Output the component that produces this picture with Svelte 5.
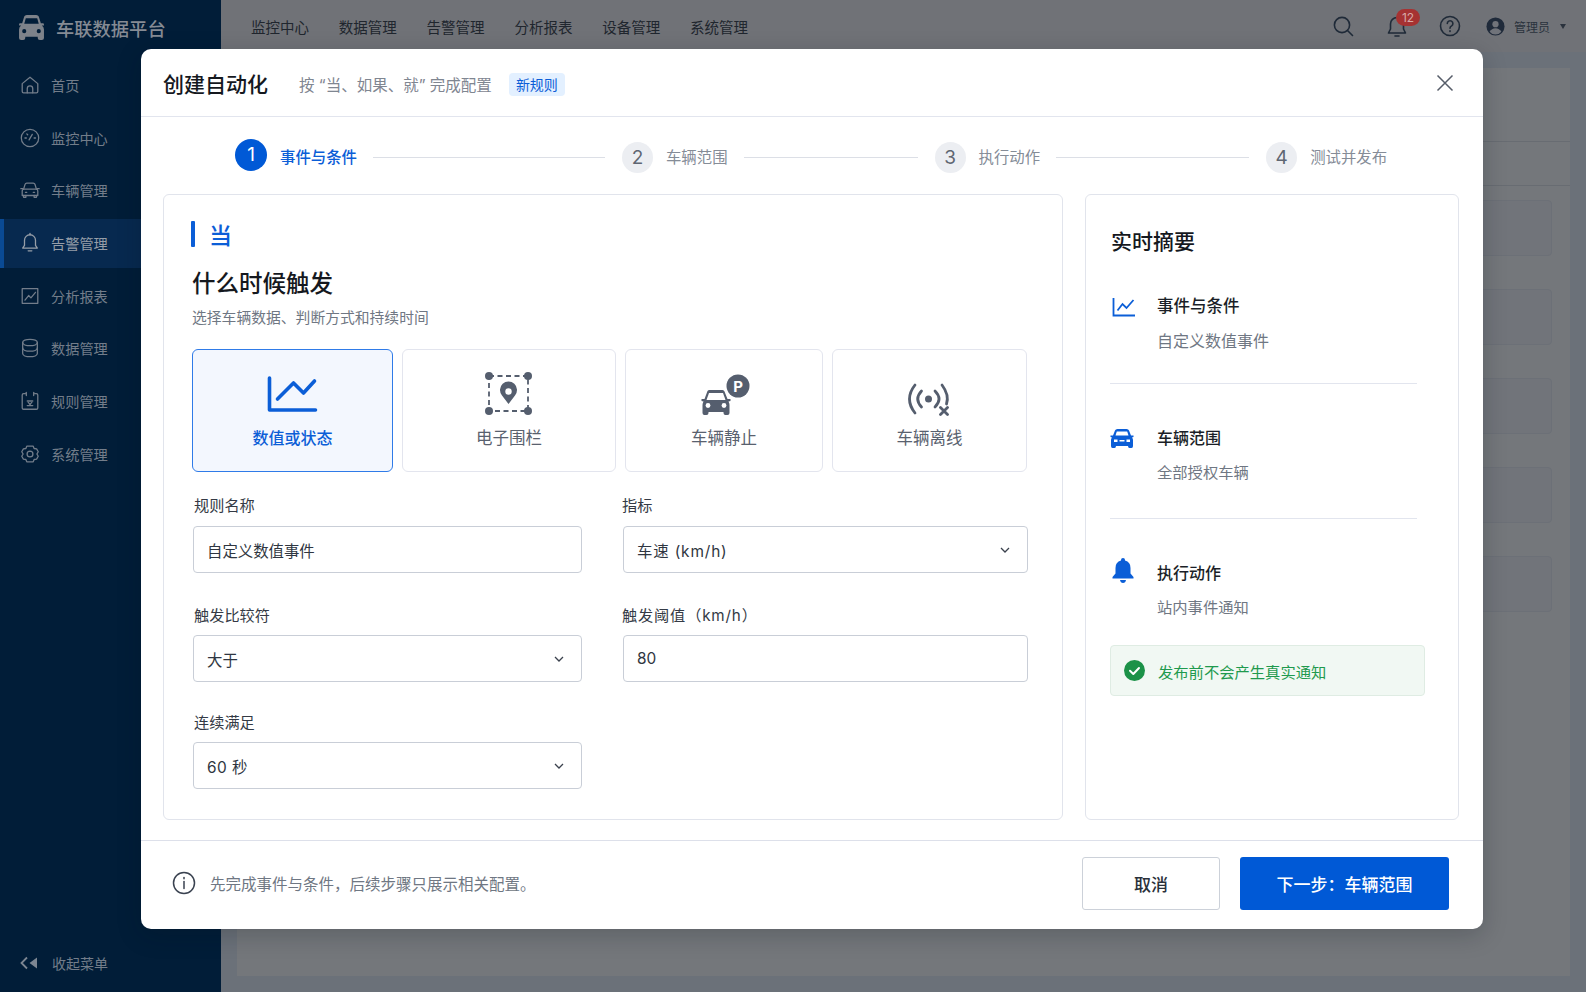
<script>
  const icons = {
    home: ['M3.5 10.5 12 3.5l8.5 7V19a1.5 1.5 0 0 1-1.5 1.5H5A1.5 1.5 0 0 1 3.5 19z', 'M9 20.5V16a3 3 0 0 1 6 0v4.5'],
    gauge: ['M12 2.5a9.5 9.5 0 1 0 0 19 9.5 9.5 0 0 0 0-19z', 'M11 14l3.5-6', 'M6.5 12H8', 'M8.5 7.5l1 1', 'M16.5 12H18'],
    car: ['M5 11l1.6-5.2A2 2 0 0 1 8.5 4.4h7a2 2 0 0 1 1.9 1.4L19 11', 'M3.5 13a2 2 0 0 1 2-2h13a2 2 0 0 1 2 2v5h-17z', 'M5 18v2h2.5v-2', 'M16.5 18v2H19v-2', 'M7 14.5h1.5', 'M15.5 14.5H17', 'M2 10.5h2', 'M20 10.5h2'],
    bell: ['M12 3a6 6 0 0 0-6 6v5.5L4 17.5h16l-2-3V9a6 6 0 0 0-6-6z', 'M12 1.5V3', 'M10 20.5h4'],
    chart: ['M3.5 4h17v16h-17z', 'M6.5 16.5l4-5 2.5 2.5 5-6'],
    db: ['M4 6c0-2 3.6-3.5 8-3.5S20 4 20 6s-3.6 3.5-8 3.5S4 8 4 6z', 'M4 6v12c0 2 3.6 3.5 8 3.5s8-1.500 8-3.500V6', 'M4 12c0 2 3.600 3.500 8 3.500s8-1.500 8-3.500'],
    rule: ['M7 4H5a1.500 1.500 0 0 0-1.500 1.500v14A1.500 1.500 0 0 0 5 21h14a1.500 1.500 0 0 0 1.500-1.500v-14A1.500 1.500 0 0 0 19 4h-2', 'M8 2.500V6', 'M16 2.500V6', 'M9 12h6', 'M12 15.500 10 13.500', 'M12 15.500 14 13.500', 'M9 17h6'],
    gear: ['M8.500 3.500h7l1 2.500 2.700.400 1.800 3.100-1.500 2.500 1.500 2.500-1.800 3.100-2.700.400-1 2.500h-7l-1-2.500-2.700-.400L3 14.500 4.500 12 3 9.500l1.800-3.100 2.700-.400z', 'M12 8.800a3.200 3.200 0 1 0 0 6.400 3.200 3.200 0 0 0 0-6.400z']
  };
  const nav = [
    ['首页', 'home'], ['监控中心', 'gauge'], ['车辆管理', 'car'], ['告警管理', 'bell', true],
    ['分析报表', 'chart'], ['数据管理', 'db'], ['规则管理', 'rule'], ['系统管理', 'gear']
  ];
  const top = ['监控中心', '数据管理', '告警管理', '分析报表', '设备管理', '系统管理'];
  const cards = [1, 2, 3, 4, 5];
  const steps = [
    { n: 1, label: '事件与条件', line: 232, on: true },
    { n: 2, label: '车辆范围', line: 174 },
    { n: 3, label: '执行动作', line: 193 },
    { n: 4, label: '测试并发布' }
  ];
  const carFill = 'M15 19Q15.500 18 17 18H30Q31.500 18 32 19.500L35 27H38V29L36 29.500Q37 31 37 33V41Q37 43 35 43H33Q31 43 31 41V40H16V41Q16 43 14 43H12Q10 43 10 41V33Q10 31 11 29.500L9 29V27H12Z';
</script>

<div class="page">
  <aside class="side">
    <div class="brand">
      <svg class="brand-car" viewBox="0 0 26 24"><path d="M6 1.500Q6.500 0 8.500 0h9q2 0 2.500 1.500L22 8h2a1 1 0 0 1 1 1v1h-2q2 1.500 2 4v8q0 2-2 2h-2q-2 0-2-2v-1H7v1q0 2-2 2H3q-2 0-2-2v-8q0-2.500 2-4H1V9a1 1 0 0 1 1-1h2z"/><path class="cut" d="M7.500 3h11l1.500 5.500H6zM6 13.500a2 2 0 1 0 0 4 2 2 0 0 0 0-4zM20 13.500a2 2 0 1 0 0 4 2 2 0 0 0 0-4z"/></svg>
      <span>车联数据平台</span>
    </div>
    <nav class="menu">
      {#each nav as [label, icon, active]}
        <div class="menu-item" class:active>
          <svg class="menu-icon" viewBox="0 0 24 24">{#each icons[icon] as d}<path {d}/>{/each}</svg>
          <span>{label}</span>
        </div>
      {/each}
    </nav>
    <div class="collapse">
      <svg viewBox="0 0 18 14"><path class="chev" d="M7 1.500 1.500 7 7 12.500"/><path class="tri" d="M17 1.500v11L9.500 7z"/></svg>
      <span>收起菜单</span>
    </div>
  </aside>

  <div class="main">
    <header class="topbar">
      <div class="top-nav">
        {#each top as t}<span>{t}</span>{/each}
      </div>
      <div class="top-tools">
        <svg class="tool" viewBox="0 0 24 24"><circle cx="11" cy="11" r="7.600"/><path d="M16.500 16.500 21.500 21.500"/></svg>
        <div class="bell-wrap">
          <svg class="tool" viewBox="0 0 24 24"><path d="M12 3.500a6.500 6.500 0 0 0-6.500 6.500v5L3.500 19h17l-2-4v-5A6.500 6.500 0 0 0 12 3.500z"/><path d="M10 22h4"/></svg>
          <span class="badge">12</span>
        </div>
        <svg class="tool" viewBox="0 0 24 24"><circle cx="12" cy="12" r="9.500"/><path d="M9.300 9.500a2.800 2.800 0 1 1 4.300 2.400c-1 .600-1.600 1.200-1.600 2.400"/><path d="M12 16.800v.6"/></svg>
        <div class="user">
          <svg viewBox="0 0 20 20"><circle cx="10" cy="10" r="9.500" class="u-bg"/><circle cx="10" cy="7.500" r="3.300" class="u-fg"/><path d="M3.800 15.500Q6 11.800 10 11.800t6.200 3.700Q13.800 18.500 10 18.500T3.800 15.500z" class="u-fg"/></svg>
          <span>管理员</span>
          <i class="caret"></i>
        </div>
      </div>
    </header>
    <section class="panel">
      <div class="panel-row first"></div>
      <div class="panel-row second"></div>
      <div class="panel-cards">
        {#each cards as c}<div class="panel-card"></div>{/each}
      </div>
    </section>
  </div>

  <div class="modal">
    <header class="m-head">
      <h1>创建自动化</h1>
      <span class="m-sub">按 “当、如果、就” 完成配置</span>
      <span class="tag">新规则</span>
      <svg class="close" viewBox="0 0 18 18"><path d="M1.500 1.500 16.500 16.500M16.500 1.500 1.500 16.500"/></svg>
    </header>

    <div class="steps">
      {#each steps as s}
        <span class="num" class:on={s.on}>{s.n}</span>
        <span class="step-label" class:on={s.on}>{s.label}</span>
        {#if s.line}<i class="step-line" style="width:{s.line}px"></i>{/if}
      {/each}
    </div>

    <div class="body">
      <section class="form-card">
        <div class="when"><i></i><span>当</span></div>
        <h2>什么时候触发</h2>
        <p class="desc">选择车辆数据、判断方式和持续时间</p>

        <div class="tiles">
          <div class="tile sel">
            <svg viewBox="0 0 60 44"><path class="line-blue" d="M6.500 6V38H52.500"/><path class="line-blue" d="M14.500 27 30.500 11 40.500 21 51.500 9"/></svg>
            <span>数值或状态</span>
          </div>
          <div class="tile">
            <svg viewBox="0 0 60 44">
              <path class="dash" d="M10 4H49V39H10z"/>
              <circle cx="10" cy="4" r="4" class="fillg"/><circle cx="49" cy="4" r="4" class="fillg"/><circle cx="10" cy="39" r="4" class="fillg"/><circle cx="49" cy="39" r="4" class="fillg"/>
              <path class="fillg" d="M29.500 32 23 23.500A8.500 8.500 0 1 1 36 23.500z"/>
              <circle cx="29.500" cy="19.500" r="3.200" class="fillw"/>
            </svg>
            <span>电子围栏</span>
          </div>
          <div class="tile">
            <svg class="park" viewBox="0 0 60 44">
              <path class="fillg" d={carFill}/>
              <path class="fillw" d="M16.500 21H30.500L33 28H14Z"/>
              <circle cx="15.500" cy="33.500" r="2.400" class="fillw"/><circle cx="31.500" cy="33.500" r="2.400" class="fillw"/>
              <circle cx="45.500" cy="14" r="11.500" class="fillg"/>
              <text x="45.500" y="19.500" class="p">P</text>
            </svg>
            <span>车辆静止</span>
          </div>
          <div class="tile">
            <svg viewBox="0 0 60 44">
              <g class="arcs"><path d="M15 13Q4 27 15 41"/><path d="M21.500 19Q14 27 21.500 35"/><path d="M35 19Q43 27 35 35"/><path d="M42 13Q49.500 23 46.500 32"/><path d="M40.500 35.500 47.500 42.500M47.500 35.500 40.500 42.500"/></g>
              <circle cx="28.500" cy="27" r="3.500" class="fillg"/>
            </svg>
            <span>车辆离线</span>
          </div>
        </div>

        <div class="fields">
          <div class="field r1"><span class="f-label">规则名称</span><div class="box">自定义数值事件</div></div>
          <div class="field r1 right"><span class="f-label">指标</span><div class="box"><span class="wider">车速 (km/h)</span><svg class="chevron" viewBox="0 0 10 6"><path d="M1 1l4 4 4-4"/></svg></div></div>
          <div class="field r2"><span class="f-label">触发比较符</span><div class="box">大于<svg class="chevron" viewBox="0 0 10 6"><path d="M1 1l4 4 4-4"/></svg></div></div>
          <div class="field r2 right"><span class="f-label wider">触发阈值（km/h）</span><div class="box">80</div></div>
          <div class="field r3"><span class="f-label">连续满足</span><div class="box"><span class="wide">60 秒</span><svg class="chevron" viewBox="0 0 10 6"><path d="M1 1l4 4 4-4"/></svg></div></div>
        </div>
      </section>

      <aside class="summary">
        <h3>实时摘要</h3>
        <div class="s-item s1">
          <svg class="s-icon" viewBox="0 0 24 20"><path class="line-s" d="M1.500 1V18.500H23"/><path class="line-s" d="M5.500 13.500 10.500 7l4 4 7-8"/></svg>
          <div><b>事件与条件</b><p>自定义数值事件</p></div>
        </div>
        <div class="s-item s2">
          <svg class="s-icon" viewBox="0 0 24 19"><path class="fillb" d="M5 1.500Q5.500 0 7.500 0h9q2 0 2.500 1.500L21 6.500h2.500v1.500l-1.500.500q1 1 1 2.500v6q0 2-1.500 2h-2q-1.500 0-1.500-2H6q0 2-1.500 2h-2Q1 19 1 17v-6q0-1.500 1-2.500L.5 8V6.500H3z"/><path class="fillw" d="M6.800 2.500h10.400l1.300 4H5.500zM4 10.500h3.500v2.500H4zM16.500 10.500H20v2.500h-3.500zM9.500 11h5v1.500h-5z"/></svg>
          <div><b>车辆范围</b><p>全部授权车辆</p></div>
        </div>
        <div class="s-item s3">
          <svg class="s-icon" viewBox="0 0 22 25"><path class="fillb" d="M11 0a2 2 0 0 1 2 2v.6A7.500 7.500 0 0 1 18.500 10v5.500L21.500 19v1.500H.5V19l3-3.500V10A7.500 7.500 0 0 1 9 2.600V2a2 2 0 0 1 2-2z"/><path class="fillb" d="M8 22h6q-.500 3-3 3t-3-3z"/></svg>
          <div><b>执行动作</b><p>站内事件通知</p></div>
        </div>
        <div class="notice">
          <svg viewBox="0 0 21 21"><circle cx="10.500" cy="10.500" r="10.500" fill="#1c9248"/><path d="M6 10.800 9.300 14l5.700-6" fill="none" stroke="#fff" stroke-width="2" stroke-linecap="round" stroke-linejoin="round"/></svg>
          <span>发布前不会产生真实通知</span>
        </div>
      </aside>
    </div>

    <footer class="foot">
      <svg class="info" viewBox="0 0 24 24"><circle cx="12" cy="12" r="10.500"/><path d="M12 10.500V17.500"/><path d="M12 6.500v1.200"/></svg>
      <span class="hint">先完成事件与条件，后续步骤只展示相关配置。</span>
      <button class="btn ghost">取消</button>
      <button class="btn primary">下一步：车辆范围</button>
    </footer>
  </div>
</div>

<style>
  :global(body) { margin: 0; background: #6b7179; }
  .page {
    position: relative;
    display: flex;
    width: 1586px;
    height: 992px;
    overflow: hidden;
    font-family: Inter, "Noto Sans CJK SC", sans-serif;
  }
  svg { display: block; flex: none; }
  h1, h2, h3, p { margin: 0; font-weight: 500; }

  /* sidebar */
  .side { display: flex; flex-direction: column; width: 221px; flex: none; background: #011d38; color: #737d8a; }
  .brand { display: flex; align-items: center; gap: 11px; height: 60.500px; padding: 0 0 5px 18px; box-sizing: border-box; color: #858b94; font-size: 18.300px; font-weight: 500; }
  .brand-car { width: 27px; height: 25px; fill: #7d828a; }
  .brand-car .cut { fill: #011d38; }
  .menu { display: flex; flex-direction: column; gap: 3.700px; }
  .menu-item { display: flex; align-items: center; gap: 10px; height: 49px; padding-left: 19px; box-sizing: border-box; font-size: 14.200px; }
  .menu-item.active { background: #07294f; box-shadow: inset 4px 0 0 #0a4a94; color: #969ea8; }
  .menu-icon { width: 22px; height: 22px; fill: none; stroke: currentColor; stroke-width: 1.400; stroke-linecap: round; stroke-linejoin: round; }
  .collapse { display: flex; align-items: center; gap: 14px; height: 59px; margin-top: auto; padding-left: 20px; font-size: 14px; }
  .collapse svg { width: 18px; height: 14px; }
  .chev { fill: none; stroke: #7d8692; stroke-width: 1.800; }
  .tri { fill: #7d8692; }

  /* page behind */
  .main { display: flex; flex-direction: column; flex: 1; min-width: 0; }
  .topbar { display: flex; align-items: center; justify-content: space-between; height: 52px; flex: none; padding: 0 20px 0 30px; background: #707277; box-sizing: border-box; }
  .top-nav { display: flex; gap: 29.800px; font-size: 14.500px; color: #20262e; }
  .top-tools { display: flex; align-items: center; gap: 29px; }
  .tool { width: 24px; height: 24px; fill: none; stroke: #1f2a38; stroke-width: 1.600; stroke-linecap: round; stroke-linejoin: round; }
  .top-tools > .tool:first-child { margin-right: 1px; }
  .bell-wrap { position: relative; }
  .badge { position: absolute; left: 11px; top: -5px; width: 24px; height: 17px; border-radius: 9px; background: #a63232; color: #d8a9a6; font-size: 12px; line-height: 17px; text-align: center; }
  .user { display: flex; align-items: center; gap: 9px; margin-left: -5px; font-size: 12px; color: #2a323d; }
  .user svg { width: 19px; height: 19px; }
  .u-bg { fill: #1f2a3a; }
  .u-fg { fill: #70737a; }
  .caret { width: 0; height: 0; margin-left: 1px; border: 3.500px solid transparent; border-top: 5px solid #2a323d; border-bottom: 0; }
  .panel { display: flex; flex-direction: column; margin: 16px; height: 908px; flex: none; background: #74777b; }
  .panel-row { flex: none; border-bottom: 1px solid #686c72; }
  .panel-row.first { height: 73px; }
  .panel-row.second { height: 43px; }
  .panel-cards { display: flex; flex-direction: column; gap: 33px; padding: 14px 18px 0; }
  .panel-card { height: 56px; border-radius: 4px; background: #71747a; border: 1px solid #6c7077; box-sizing: border-box; }

  /* modal */
  .modal { position: absolute; left: 141px; top: 49px; display: flex; flex-direction: column; width: 1342px; height: 880px; border-radius: 10px; background: #fff; box-shadow: 0 6px 24px rgba(10, 16, 28, .22); }
  .m-head { display: flex; align-items: center; flex: none; height: 68px; padding: 0 29px 0 22px; border-bottom: 1px solid #e2e5ee; box-sizing: border-box; }
  h1 { font-size: 21px; color: #15181e; }
  .m-sub { margin: 3px 0 0 31px; font-size: 15.500px; color: #7f8691; }
  .tag { margin: 3px 0 0 17px; padding: 0 7px; height: 23px; border-radius: 4px; background: #e3f0ff; color: #0b5ed7; font-size: 14px; line-height: 23px; }
  .close { width: 18px; height: 18px; margin-left: auto; fill: none; stroke: #565d69; stroke-width: 1.500; }

  .steps { display: flex; align-items: center; flex: none; height: 77px; padding-left: 94px; }
  .num { display: flex; align-items: center; justify-content: center; width: 31px; height: 31px; margin: 4px 13px 0 0; border-radius: 50%; background: #eceef2; color: #5f6672; font-size: 19px; }
  .num.on { width: 32px; height: 32px; margin: -2px 13px 0 0; background: #0059d6; color: #fff; }
  .step-label { font-size: 15.400px; color: #858c97; }
  .step-label.on { color: #0b5ed7; font-weight: 500; }
  .step-line { height: 1.500px; margin: 4px 17px 0 16px; background: #dcdfe6; }

  .body { display: flex; gap: 22px; height: 626px; flex: none; padding: 0 24px 0 22px; }
  .form-card, .summary { border: 1px solid #e1e4ec; border-radius: 6px; box-sizing: border-box; }
  .form-card { width: 900px; flex: none; padding: 26px 0 0 27px; }
  .when { display: flex; align-items: center; gap: 14px; height: 26px; color: #0b5ed7; font-size: 23px; font-weight: 500; }
  .when i { width: 4px; height: 26px; border-radius: 1px; background: #0b5ed7; }
  h2 { margin: 20px 0 0 1px; font-size: 23.500px; line-height: 34px; color: #15181e; }
  .desc { margin: 7px 0 0 1px; font-size: 14.800px; font-weight: 400; line-height: 20px; color: #6f7783; }
  .tiles { display: grid; grid-template-columns: 201px 214px 198px 195px; gap: 9px; height: 122.500px; margin: 21px 0 0 1px; }
  .tile { display: flex; flex-direction: column; align-items: center; padding-top: 22px; border: 1px solid #e3e5ee; border-radius: 6px; box-sizing: border-box; color: #59616e; font-size: 16.500px; }
  .tile svg { width: 60px; height: 44px; margin-bottom: 10px; }
  .tile svg.park { transform: translateX(-1.500px); }
  .tile span { line-height: 24px; }
  .tile.sel { border: 1.500px solid #2f7be8; background: #f3f7fe; color: #0b5ed7; font-weight: 500; font-size: 16px; }
  .line-blue { fill: none; stroke: #0b5ed7; stroke-width: 3.600; stroke-linecap: round; stroke-linejoin: round; }
  .dash { fill: none; stroke: #555e6e; stroke-width: 1.800; stroke-dasharray: 5 3.500; }
  .fillg { fill: #555e6e; }
  .fillw { fill: #fff; }
  .fillb { fill: #0b5ed7; }
  .p { fill: #fff; font-size: 15px; font-weight: 700; text-anchor: middle; }
  .arcs path { fill: none; stroke: #555e6e; stroke-width: 2.800; stroke-linecap: round; }

  .fields { display: grid; grid-template-columns: 389px 405px; column-gap: 41px; margin: 24.500px 0 0 2px; }
  .field { display: flex; flex-direction: column; }
  .field.r1 { gap: 10px; }
  .field.r2 { gap: 9px; margin-top: 33px; }
  .field.r3 { gap: 9px; margin-top: 31px; }
  .f-label { font-size: 15.200px; line-height: 20px; color: #343a45; padding-left: 1px; }
  .right .f-label { padding-left: 0; margin-left: -1px; }
  .wide { letter-spacing: .5px; }
  .wider { letter-spacing: .85px; }
  .box { display: flex; align-items: center; justify-content: space-between; height: 47px; padding: 0 17px 0 13px; border: 1px solid #c9ced7; border-radius: 4px; box-sizing: border-box; font-size: 15.400px; color: #2f3641; }
  .chevron { width: 10px; height: 6px; fill: none; stroke: #3a414d; stroke-width: 1.300; }

  .summary { width: 374px; flex: none; padding: 32px 0 0 25px; }
  h3 { font-size: 21px; line-height: 30px; color: #15181e; }
  .s-item { position: relative; width: 307px; margin-left: -1px; padding-left: 47px; box-sizing: border-box; border-bottom: 1px solid #e2e5ee; }
  .s-item b { display: block; font-size: 16px; font-weight: 500; line-height: 22px; color: #1b1f27; }
  .s-item p { margin-top: 12px; font-size: 15.300px; font-weight: 400; line-height: 24px; color: #6f7783; }
  .s1 b { font-size: 16.500px; }
  .s1 p { font-size: 16px; }
  .s1 { margin-top: 38px; padding-bottom: 30px; }
  .s2 { padding-top: 43px; padding-bottom: 33px; }
  .s3 { padding-top: 43px; border-bottom: 0; }
  .s-icon { position: absolute; left: 2px; }
  .s1 .s-icon { top: 2px; width: 24px; height: 20px; }
  .s2 .s-icon { top: 45px; left: 0; width: 24px; height: 19px; }
  .s3 .s-icon { top: 39px; left: 2px; width: 22px; height: 25px; }
  .line-s { fill: none; stroke: #0b5ed7; stroke-width: 1.800; }
  .notice { display: flex; align-items: center; gap: 13px; width: 315px; height: 51px; margin: 25px 0 0 -1px; padding-left: 13px; border: 1px solid #dfece3; border-radius: 4px; background: #f1f8f3; box-sizing: border-box; color: #1f9a4e; font-size: 15.300px; }
  .notice svg { width: 21px; height: 21px; }

  .foot { display: flex; align-items: center; flex: 1; margin-top: 20px; padding: 0 34px 4px 31px; border-top: 1px solid #dde0ea; }
  .info { width: 24px; height: 24px; fill: none; stroke: #3a4250; stroke-width: 1.500; stroke-linecap: round; }
  .hint { margin-left: 14px; font-size: 15.500px; color: #6f7783; }
  .btn { height: 53px; border-radius: 3px; font: inherit; font-size: 17px; font-weight: 500; box-sizing: border-box; }
  .ghost { width: 138px; margin-left: auto; border: 1px solid #ccd1d9; background: #fff; color: #2a303a; }
  .primary { width: 209px; margin-left: 20px; border: 0; background: #0059d6; color: #fff; }
</style>
